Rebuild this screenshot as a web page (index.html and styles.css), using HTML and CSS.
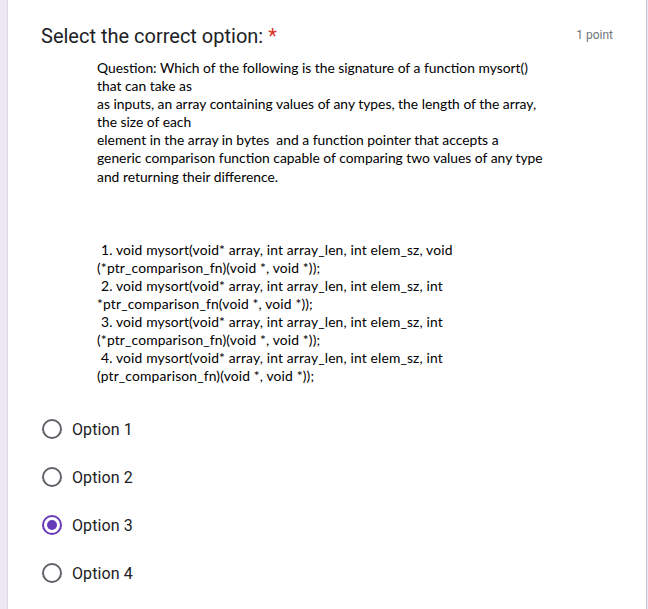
FILE: index.html
```html
<!DOCTYPE html>
<html>
<head>
<meta charset="utf-8">
<link rel="stylesheet" href="styles.css">
</head>
<body>
<div class="card">
  <div class="header">
    <div class="title">Select the correct option: <span class="req">*</span></div>
    <div class="points">1 point</div>
  </div>
  <div class="question">
    <p class="para">Question: Which of the following is the signature of a function mysort()<br>that can take as<br>as inputs, an array containing values of any types, the length of the array,<br>the size of each<br>element in the array in bytes&nbsp; and a function pointer that accepts a<br>generic comparison function capable of comparing two values of any type<br>and returning their difference.</p>
    <div class="choices">
      <p class="item">1. void mysort(void* array, int array_len, int elem_sz, void<br>(*ptr_comparison_fn)(void *, void *));</p>
      <p class="item">2. void mysort(void* array, int array_len, int elem_sz, int<br>*ptr_comparison_fn(void *, void *));</p>
      <p class="item">3. void mysort(void* array, int array_len, int elem_sz, int<br>(*ptr_comparison_fn)(void *, void *));</p>
      <p class="item">4. void mysort(void* array, int array_len, int elem_sz, int<br>(ptr_comparison_fn)(void *, void *));</p>
    </div>
  </div>
  <div class="options">
    <label class="option"><span class="radio"></span><span class="label">Option 1</span></label>
    <label class="option"><span class="radio"></span><span class="label">Option 2</span></label>
    <label class="option"><span class="radio checked"></span><span class="label">Option 3</span></label>
    <label class="option"><span class="radio"></span><span class="label">Option 4</span></label>
  </div>
</div>
</body>
</html>
```
FILE: styles.css
```css
html, body {
  margin: 0;
  padding: 0;
  background: #ece8f4;
  height: 100%;
}
.card {
  margin-left: 7px;
  width: 640px;
  min-height: 609px;
  box-sizing: border-box;
  background: #fff;
  border-left: 1px solid #dcd8e4;
  border-right: 1px solid #c8c4d0;
  padding: 22px 0 0 33px;
  font-family: Roboto, "Liberation Sans", sans-serif;
}
.header {
  display: flex;
  justify-content: space-between;
  align-items: flex-start;
  padding-right: 33px;
}
.title {
  font-size: 20px;
  line-height: 28px;
  color: #202124;
  letter-spacing: 0;
}
.req {
  color: #d93025;
}
.points {
  font-size: 12px;
  color: #70757a;
  line-height: 16px;
  padding-top: 5px;
}
.question {
  margin: 9px 0 0 56px;
  font-family: Lato, "Open Sans", sans-serif;
  font-size: 13.85px;
  line-height: 18.1px;
  color: #000;
}
.para {
  margin: 0;
}
.choices {
  margin-top: 55px;
  letter-spacing: 0.15px;
}
.item {
  margin: 0;
  text-indent: 4px;
}
.options {
  margin-top: 34px;
  display: flex;
  flex-direction: column;
  gap: 28px;
}
.option {
  display: flex;
  align-items: center;
  gap: 10px;
  height: 20px;
  margin-left: 1px;
}
.radio {
  width: 20px;
  height: 20px;
  box-sizing: border-box;
  border: 2px solid #5f6368;
  border-radius: 50%;
  position: relative;
}
.radio.checked {
  border-color: #673ab7;
}
.radio.checked::after {
  content: "";
  position: absolute;
  left: 3px;
  top: 3px;
  width: 10px;
  height: 10px;
  border-radius: 50%;
  background: #673ab7;
}
.label {
  font-size: 16px;
  color: #202124;
  letter-spacing: 0.1px;
}
```
